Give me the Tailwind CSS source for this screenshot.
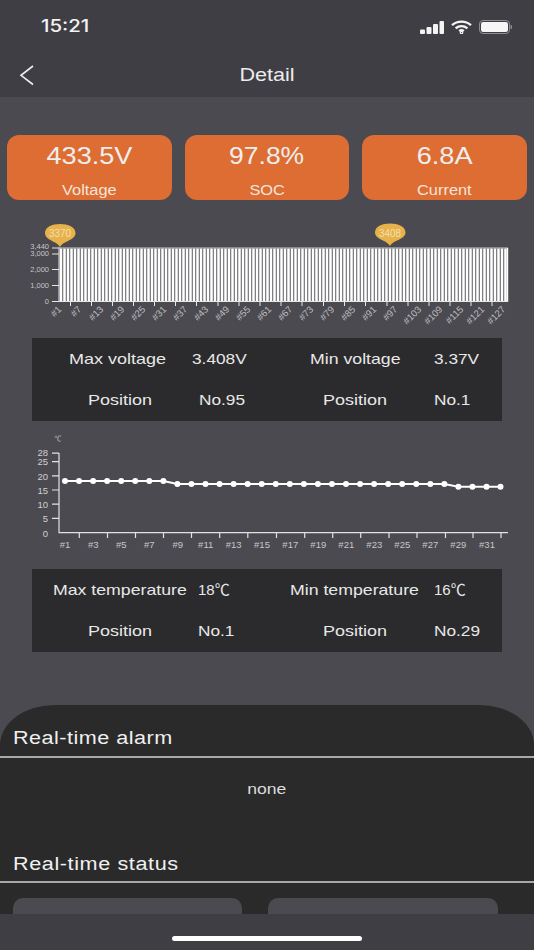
<!DOCTYPE html>
<html>
<head>
<meta charset="utf-8">
<script src="https://cdn.jsdelivr.net/npm/@tailwindcss/browser@4"></script>
</head>
<body class="m-0">
<div class="relative w-[534px] h-[950px] overflow-hidden bg-[#4b4a50] text-[#eeeeee] font-['Liberation_Sans','Noto_Sans_CJK_SC',sans-serif]">
  <header class="relative h-[97px] bg-[#3f3e44]">
    <div class="flex h-[52px] items-center justify-between pl-[41px] pr-[22px] pt-[2px]">
      <span class="inline-block origin-left scale-x-[1.2] font-['Inter'] text-[17px] font-medium text-[#f2f2f2]">15:21</span>
      <div class="flex items-center gap-[7px]">
        <svg width="24" height="13" viewBox="0 0 24 13" fill="#f4f4f4"><rect x="0" y="8.500" width="5" height="4.500" rx="1"/><rect x="6.500" y="6" width="5" height="7" rx="1"/><rect x="13" y="3" width="5" height="10" rx="1"/><rect x="19.500" y="0" width="4.500" height="13" rx="1"/></svg>
        <svg width="21" height="14" viewBox="0 0 21 14" fill="none" stroke="#f4f4f4" stroke-width="2.4"><path d="M1 5.2C6.5 .4 14.5 .4 20 5.2"/><path d="M4.6 8.3C8 5.4 13 5.4 16.4 8.3"/><path d="M8.2 11.2C9.5 10.1 11.5 10.1 12.8 11.2" /><circle cx="10.5" cy="12.6" r=".6"/></svg>
        <svg width="33" height="14" viewBox="0 0 33 14"><rect x=".5" y=".5" width="30" height="13" rx="3.5" fill="none" stroke="#8d8d90"/><rect x="2" y="2" width="27" height="10" rx="2.2" fill="#f6f6f6"/><rect x="31.5" y="5" width="1.5" height="4" rx=".7" fill="#8d8d90"/></svg>
      </div>
    </div>
    <svg class="absolute left-[19px] top-[64px]" width="16" height="22" viewBox="0 0 16 22" fill="none" stroke="#eeeeee" stroke-width="1.6"><path d="M14 2 2 11.3 14 20.5"/></svg>
    <div class="flex justify-center pt-[10px]"><span class="inline-block scale-x-[1.2] text-[18px] text-[#ececec]">Detail</span></div>
  </header>

  <main>
    <section class="mt-[38px] grid grid-cols-3 gap-[13px] px-[7px]">
      <div class="relative h-[65px] rounded-[12px] bg-[#dd6d32] text-center">
        <div class="pt-[8px] text-[23px] leading-[27px]"><span class="inline-block scale-x-[1.18]">433.5V</span></div>
        <div class="pt-[12px] text-[14px] leading-[16px] text-[#f3e5dc]"><span class="inline-block scale-x-[1.17]">Voltage</span></div>
      </div>
      <div class="relative h-[65px] rounded-[12px] bg-[#dd6d32] text-center">
        <div class="pt-[8px] text-[23px] leading-[27px]"><span class="inline-block scale-x-[1.15]">97.8%</span></div>
        <div class="pt-[12px] text-[14px] leading-[16px] text-[#f3e5dc]"><span class="inline-block scale-x-[1.17]">SOC</span></div>
      </div>
      <div class="relative h-[65px] rounded-[12px] bg-[#dd6d32] text-center">
        <div class="pt-[8px] text-[23px] leading-[27px]"><span class="inline-block scale-x-[1.18]">6.8A</span></div>
        <div class="pt-[12px] text-[14px] leading-[16px] text-[#f3e5dc]"><span class="inline-block scale-x-[1.17]">Current</span></div>
      </div>
    </section>

    <svg class="mt-[20px] block" width="534" height="110" viewBox="0 220 534 110" font-family="Liberation Sans, sans-serif">
      <line x1="59" y1="275" x2="508" y2="275" stroke="#ffffff" stroke-width="53" stroke-dasharray="2.6 .9" stroke-dashoffset="-.7"/>
      <line x1="59" y1="248" x2="508" y2="248" stroke="#d0d0d2" stroke-width="1"/>
      <line x1="507.5" y1="248" x2="507.5" y2="302" stroke="#ffffff" stroke-width="1.4"/>
      <g stroke="#e6e6e6" stroke-width="1" fill="none"><path d="M59 247.500V301.500H508"/>
        <path d="M52 248H59M52 254H59M52 269.500H59M52 285.500H59M52 301.500H59"/>
        <path d="M70.500 302V306M91.500 302V306M112.500 302V306M133.500 302V306M154.500 302V306M175.500 302V306M196.500 302V306M218 302V306M239 302V306M260 302V306M281 302V306M302 302V306M323.500 302V306M344.500 302V306M365.500 302V306M387 302V306M408 302V306M429 302V306M450 302V306M471 302V306M492 302V306"/>
      </g>
      <g fill="#c6c6c8" font-size="7.500" text-anchor="end">
        <text x="49" y="248.500">3,440</text><text x="49" y="256">3,000</text><text x="49" y="272">2,000</text><text x="49" y="288">1,000</text><text x="49" y="303.500">0</text>
      </g>
      <g fill="#bdbdc0" font-size="9.500" text-anchor="end">
        <text transform="translate(62 310) rotate(-45)">#1</text>
        <text transform="translate(82 310) rotate(-45)">#7</text>
        <text transform="translate(104 310) rotate(-45)">#13</text>
        <text transform="translate(125 310) rotate(-45)">#19</text>
        <text transform="translate(146 310) rotate(-45)">#25</text>
        <text transform="translate(167 310) rotate(-45)">#31</text>
        <text transform="translate(188 310) rotate(-45)">#37</text>
        <text transform="translate(209 310) rotate(-45)">#43</text>
        <text transform="translate(230 310) rotate(-45)">#49</text>
        <text transform="translate(251 310) rotate(-45)">#55</text>
        <text transform="translate(272 310) rotate(-45)">#61</text>
        <text transform="translate(293 310) rotate(-45)">#67</text>
        <text transform="translate(314 310) rotate(-45)">#73</text>
        <text transform="translate(335 310) rotate(-45)">#79</text>
        <text transform="translate(356 310) rotate(-45)">#85</text>
        <text transform="translate(377 310) rotate(-45)">#91</text>
        <text transform="translate(398 310) rotate(-45)">#97</text>
        <text transform="translate(422 310) rotate(-45)">#103</text>
        <text transform="translate(443 310) rotate(-45)">#109</text>
        <text transform="translate(464 310) rotate(-45)">#115</text>
        <text transform="translate(485 310) rotate(-45)">#121</text>
        <text transform="translate(506 310) rotate(-45)">#127</text>
      </g>
      <path d="M60 247C57 241 45 240.500 45 233C45 227 52 224 60 224C68 224 75.500 227 75.500 233C75.500 240.500 63 241 60 247Z" fill="#e8b24a"/>
      <path d="M390 246C387 240 375 239.500 375 232.500C375 226.500 382 223.500 390 223.500C398 223.500 405.500 226.500 405.500 232.500C405.500 239.500 393 240 390 246Z" fill="#e8b24a"/>
      <g fill="#f3ddb0" font-size="10" text-anchor="middle"><text x="60" y="237">3370</text><text x="390" y="236.500">3408</text></g>
    </svg>

    <section class="mx-[32px] mt-[8px] grid h-[83px] grid-cols-[160px_50px_178px_82px] grid-rows-2 items-center bg-[#2b2b2d] text-[15px] text-[#e8e8e8] whitespace-nowrap">
      <div class="pl-[37px]"><span class="inline-block origin-left scale-x-[1.2]">Max voltage</span></div>
      <div><span class="inline-block origin-left scale-x-[1.15]">3.408V</span></div>
      <div class="pl-[68px]"><span class="inline-block origin-left scale-x-[1.18]">Min voltage</span></div>
      <div class="pl-[14px]"><span class="inline-block origin-left scale-x-[1.15]">3.37V</span></div>
      <div class="pl-[56px]"><span class="inline-block origin-left scale-x-[1.2]">Position</span></div>
      <div class="pl-[7px]"><span class="inline-block origin-left scale-x-[1.15]">No.95</span></div>
      <div class="pl-[81px]"><span class="inline-block origin-left scale-x-[1.2]">Position</span></div>
      <div class="pl-[14px]"><span class="inline-block origin-left scale-x-[1.15]">No.1</span></div>
    </section>

    <svg class="mt-[4px] block" width="534" height="140" viewBox="0 425 534 140" font-family="Liberation Sans, Noto Sans CJK SC, sans-serif">
      <text x="58" y="441" fill="#c6c6c8" font-size="7" text-anchor="middle">℃</text>
      <g stroke="#e2e2e2" stroke-width="1.2" fill="none"><path d="M59 453V532.600H508"/>
        <path d="M52 453.200H59M52 461.700H59M52 475.800H59M52 490H59M52 504.200H59M52 518.400H59"/>
        <path d="M79.300 533V538M107.500 533V538M135.500 533V538M163.500 533V538M191.500 533V538M219.700 533V538M247.800 533V538M276.500 533V538M304.700 533V538M332.700 533V538M360.700 533V538M389 533V538M417 533V538M445.500 533V538M473 533V538M501 533V538"/>
      </g>
      <g fill="#d0d0d2" font-size="9.500" text-anchor="end">
        <text x="48" y="455.500">28</text><text x="48" y="465">25</text><text x="48" y="479.500">20</text><text x="48" y="493.500">15</text><text x="48" y="507.500">10</text><text x="48" y="522">5</text><text x="48" y="536.500">0</text>
      </g>
      <g fill="#c6c6c8" font-size="9.500" text-anchor="middle">
        <text x="65" y="548">#1</text><text x="93.300" y="548">#3</text><text x="121.300" y="548">#5</text><text x="149.300" y="548">#7</text><text x="177.700" y="548">#9</text><text x="205.700" y="548">#11</text><text x="233.700" y="548">#13</text><text x="262" y="548">#15</text><text x="290.300" y="548">#17</text><text x="318.300" y="548">#19</text><text x="346.300" y="548">#21</text><text x="374.300" y="548">#23</text><text x="402.300" y="548">#25</text><text x="430.300" y="548">#27</text><text x="458.300" y="548">#29</text><text x="487" y="548">#31</text>
      </g>
      <path d="M65 481H163.350L177.400 484H444.300L458.350 486.700H500.500" stroke="#ffffff" stroke-width="2" fill="none"/>
      <g fill="#ffffff">
        <circle cx="65" cy="481" r="3"/><circle cx="79.050" cy="481" r="3"/><circle cx="93.100" cy="481" r="3"/><circle cx="107.150" cy="481" r="3"/><circle cx="121.200" cy="481" r="3"/><circle cx="135.250" cy="481" r="3"/><circle cx="149.300" cy="481" r="3"/><circle cx="163.350" cy="481" r="3"/>
        <circle cx="177.400" cy="484" r="3"/><circle cx="191.450" cy="484" r="3"/><circle cx="205.500" cy="484" r="3"/><circle cx="219.550" cy="484" r="3"/><circle cx="233.600" cy="484" r="3"/><circle cx="247.650" cy="484" r="3"/><circle cx="261.700" cy="484" r="3"/><circle cx="275.750" cy="484" r="3"/><circle cx="289.800" cy="484" r="3"/><circle cx="303.850" cy="484" r="3"/><circle cx="317.900" cy="484" r="3"/><circle cx="331.950" cy="484" r="3"/><circle cx="346" cy="484" r="3"/><circle cx="360.050" cy="484" r="3"/><circle cx="374.100" cy="484" r="3"/><circle cx="388.150" cy="484" r="3"/><circle cx="402.200" cy="484" r="3"/><circle cx="416.250" cy="484" r="3"/><circle cx="430.300" cy="484" r="3"/><circle cx="444.350" cy="484" r="3"/>
        <circle cx="458.400" cy="486.700" r="3"/><circle cx="472.450" cy="486.700" r="3"/><circle cx="486.500" cy="486.700" r="3"/><circle cx="500.500" cy="486.700" r="3"/>
      </g>
    </svg>

    <section class="mx-[32px] mt-[4px] grid h-[83px] grid-cols-[160px_50px_178px_82px] grid-rows-2 items-center bg-[#2b2b2d] text-[15px] text-[#e8e8e8] whitespace-nowrap">
      <div class="pl-[21px]"><span class="inline-block origin-left scale-x-[1.18]">Max temperature</span></div>
      <div class="pl-[6px]"><span class="inline-block origin-left">18℃</span></div>
      <div class="pl-[48px]"><span class="inline-block origin-left scale-x-[1.18]">Min temperature</span></div>
      <div class="pl-[14px]"><span class="inline-block origin-left">16℃</span></div>
      <div class="pl-[56px]"><span class="inline-block origin-left scale-x-[1.2]">Position</span></div>
      <div class="pl-[6px]"><span class="inline-block origin-left scale-x-[1.15]">No.1</span></div>
      <div class="pl-[81px]"><span class="inline-block origin-left scale-x-[1.2]">Position</span></div>
      <div class="pl-[14px]"><span class="inline-block origin-left scale-x-[1.15]">No.29</span></div>
    </section>

    <section class="mt-[53px] h-[245px] rounded-t-[55px_40px] bg-[#2a2a2b]">
      <div class="flex h-[53px] items-end border-b-2 border-[#a8a8a8] pb-[7px] pl-[13px]"><span class="inline-block origin-left scale-x-[1.2] text-[18px] leading-[22px] tracking-[0.4px] text-[#f0f0f0]">Real-time alarm</span></div>
      <div class="flex h-[64px] justify-center pt-[21px]"><span class="inline-block scale-x-[1.17] text-[15px] leading-[20px] text-[#dddddd]">none</span></div>
      <div class="flex h-[61px] items-end border-b-2 border-[#a8a8a8] pb-[6px] pl-[13px]"><span class="inline-block origin-left scale-x-[1.2] text-[18px] leading-[22px] tracking-[0.5px] text-[#f0f0f0]">Real-time status</span></div>
      <div class="mt-[15px] flex gap-[26px] pl-[13px]">
        <div class="h-[40px] w-[229px] rounded-[10px] bg-[#4b4a50]"></div>
        <div class="h-[40px] w-[230px] rounded-[10px] bg-[#4b4a50]"></div>
      </div>
    </section>
  </main>

  <div class="absolute inset-x-0 bottom-0 flex h-[36px] justify-center bg-[#3f3e44] pt-[22px]">
    <div class="h-[5px] w-[190px] rounded-full bg-white"></div>
  </div>
</div>
</body>
</html>
